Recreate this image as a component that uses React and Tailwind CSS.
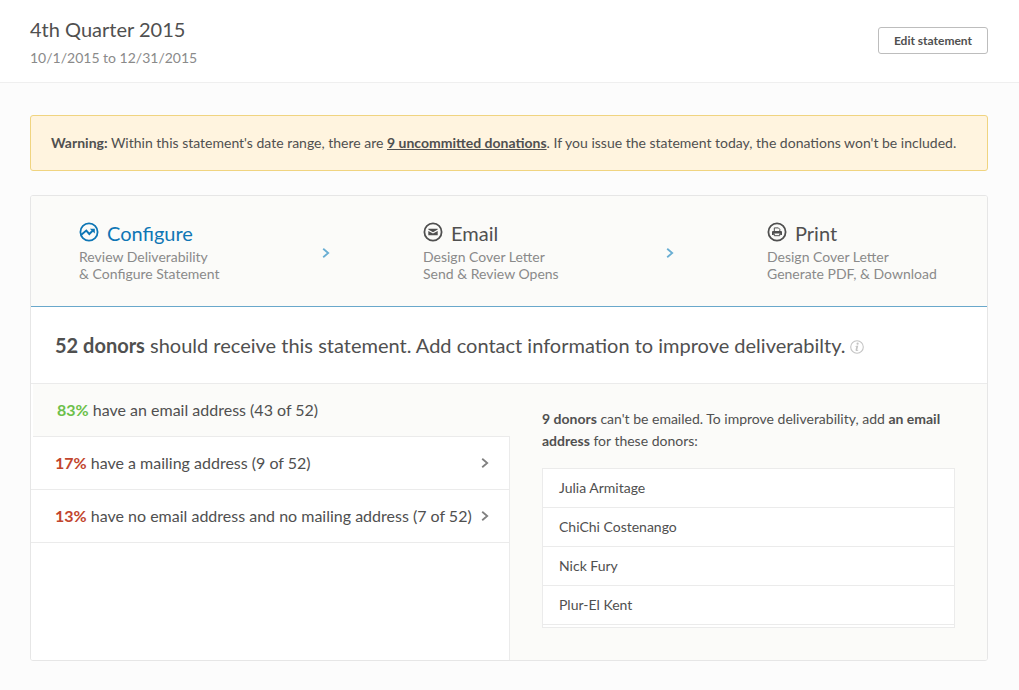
import { useState } from "react";

const ConfigureIcon = () => (
  <svg className="size-5 shrink-0" viewBox="0 0 20 20" fill="none" aria-hidden="true">
    <circle cx="10" cy="10" r="8.6" stroke="currentColor" strokeWidth="1.8" />
    <path d="M2 13L7.3 8.6L10.3 12L13.6 8.8" stroke="currentColor" strokeWidth="1.9" />
    <path d="M10.8 6.8H15.8V11.6Z" fill="currentColor" />
  </svg>
);

const EmailIcon = () => (
  <svg className="size-5 shrink-0" viewBox="0 0 20 20" fill="none" aria-hidden="true">
    <circle cx="10" cy="10" r="8.6" stroke="currentColor" strokeWidth="1.8" />
    <path d="M5.3 6.8H14.7V7.6L10 10.2L5.3 7.6Z" fill="currentColor" />
    <path d="M5.3 8.9L10 11.4L14.7 8.9V13.2H5.3Z" fill="currentColor" />
  </svg>
);

const PrintIcon = () => (
  <svg className="size-5 shrink-0" viewBox="0 0 20 20" fill="none" aria-hidden="true">
    <circle cx="10" cy="10" r="8.6" stroke="currentColor" strokeWidth="1.8" />
    <path d="M7.3 9.5V5.9H11.4L12.8 7.3V9.5" stroke="currentColor" strokeWidth="1" />
    <path d="M6 9H14Q15 9 15 10V13H13.2V11.6H6.8V13H5V10Q5 9 6 9Z" fill="currentColor" />
    <path d="M7.3 11.5V13.7H12.7V11.5" stroke="currentColor" strokeWidth="1" />
  </svg>
);

const InfoIcon = () => (
  <svg className="size-3.5" viewBox="0 0 14 14" fill="none" aria-hidden="true">
    <circle cx="7" cy="7" r="6.3" stroke="currentColor" strokeWidth="1.1" />
    <circle cx="7.6" cy="3.7" r="1.1" fill="currentColor" />
    <path d="M5.3 5.9L8.3 5.5L7.3 9.7Q7.3 10.2 8.4 9.7L8.2 10.4Q5.2 11.8 5.6 9.7L6.3 6.5L5.2 6.4Z" fill="currentColor" />
  </svg>
);

const Chevron = ({ className }) => (
  <svg className={className} width="8" height="10" viewBox="0 0 8 10" fill="none" aria-hidden="true">
    <path d="M1.2 0.8L6.2 5L1.2 9.2" stroke="currentColor" strokeWidth="1.8" />
  </svg>
);

const steps = [
  { title: "Configure", icon: ConfigureIcon, lines: ["Review Deliverability", "& Configure Statement"] },
  { title: "Email", icon: EmailIcon, lines: ["Design Cover Letter", "Send & Review Opens"] },
  { title: "Print", icon: PrintIcon, lines: ["Design Cover Letter", "Generate PDF, & Download"] },
];

const groups = [
  { percent: "83%", text: "have an email address (43 of 52)", color: "text-[#6cc04a]" },
  { percent: "17%", text: "have a mailing address (9 of 52)", color: "text-[#c2452d]" },
  { percent: "13%", text: "have no email address and no mailing address (7 of 52)", color: "text-[#c2452d]" },
];

const donors = ["Julia Armitage", "ChiChi Costenango", "Nick Fury", "Plur-El Kent"];

const Step = ({ step, active, last }) => {
  const Icon = step.icon;
  return (
    <li className={last ? "w-[172px] shrink-0" : "flex flex-1 items-center justify-between pr-[93px]"}>
      <button className="block cursor-pointer text-left whitespace-nowrap">
        <span className={`flex items-start gap-2 text-xl leading-[26px] ${active ? "text-[#0e76b5]" : "text-[#505050]"}`}>
          <span className="pt-0.5">
            <Icon />
          </span>
          {step.title}
        </span>
        <span className="mt-0.5 block text-sm leading-[17px] text-[#8a8a8a]">
          {step.lines[0]}
          <br />
          {step.lines[1]}
        </span>
      </button>
      {!last && <Chevron className="mt-1 text-[#69aed3]" />}
    </li>
  );
};

const App = () => {
  const [selected, setSelected] = useState(0);

  return (
    <div className="min-h-screen bg-[#fcfcfc] font-['Lato',sans-serif] text-[#505050]">
      <header className="flex items-start justify-between border-b border-[#efefef] bg-white pt-[15px] pr-[31px] pb-[13px] pl-[30px]">
        <div>
          <h1 className="text-xl leading-7">4th Quarter 2015</h1>
          <p className="mt-1 text-sm leading-[22px] text-[#8a8a8a]">10/1/2015 to 12/31/2015</p>
        </div>
        <button className="mt-3 cursor-pointer rounded-[3px] border border-[#bdbdbd] bg-white px-[15px] py-1 text-xs leading-[17px] font-bold">
          Edit statement
        </button>
      </header>

      <main className="pt-8 pr-[31px] pb-7 pl-[30px]">
        <div role="alert" className="rounded-[3px] border border-[#f0d480] bg-[#fff4df] px-5 py-4 text-sm leading-[22px]">
          <strong>Warning:</strong> Within this statement's date range, there are{" "}
          <a href="#donations" className="font-bold underline">
            9 uncommitted donations
          </a>
          . If you issue the statement today, the donations won't be included.
        </div>

        <section className="mt-6 overflow-hidden rounded-[3px] border border-[#e6e6e6] bg-white">
          <ol className="flex border-b border-[#69a8cb] bg-[#fbfbf9] px-12 py-6">
            {steps.map((step, i) => (
              <Step key={step.title} step={step} active={i === 0} last={i === steps.length - 1} />
            ))}
          </ol>

          <div className="flex items-center gap-1 border-b border-[#ebebeb] px-6 py-6">
            <h2 className="text-xl leading-7">
              <strong>52 donors</strong> should receive this statement. Add contact information to improve deliverabilty.
            </h2>
            <button aria-label="More about deliverability" className="mt-1 cursor-pointer text-[#c4c4c4]">
              <InfoIcon />
            </button>
          </div>

          <div className="flex">
            <div className="flex w-[479px] shrink-0 flex-col bg-white">
              {groups.map((group, i) => (
                <button
                  key={group.percent}
                  onClick={() => setSelected(i)}
                  className={`flex cursor-pointer items-center justify-between border-b border-[#ebebeb] py-3.5 pr-5 pl-6 text-left text-base leading-6 whitespace-nowrap ${
                    selected === i ? "ml-0.5 bg-[#fbfbf9]" : "border-r"
                  }`}
                >
                  <span>
                    <strong className={group.color}>{group.percent}</strong> {group.text}
                  </span>
                  {selected !== i && <Chevron className="text-[#808080]" />}
                </button>
              ))}
              <div className="flex-1 border-r border-[#ebebeb]" />
            </div>

            <div className="min-w-0 flex-1 bg-[#fbfbf9] px-8 pt-6 pb-8">
              <p className="text-sm leading-[22px]">
                <strong>9 donors</strong> can't be emailed. To improve deliverability, add{" "}
                <strong>an email address</strong> for these donors:
              </p>
              <ul className="mt-4 border border-[#ebebeb] bg-white pb-0.5">
                {donors.map((name) => (
                  <li key={name} className="border-b border-[#ebebeb] px-4 py-2 text-sm leading-[22px]">
                    {name}
                  </li>
                ))}
              </ul>
            </div>
          </div>
        </section>
      </main>
    </div>
  );
};

export default App;
